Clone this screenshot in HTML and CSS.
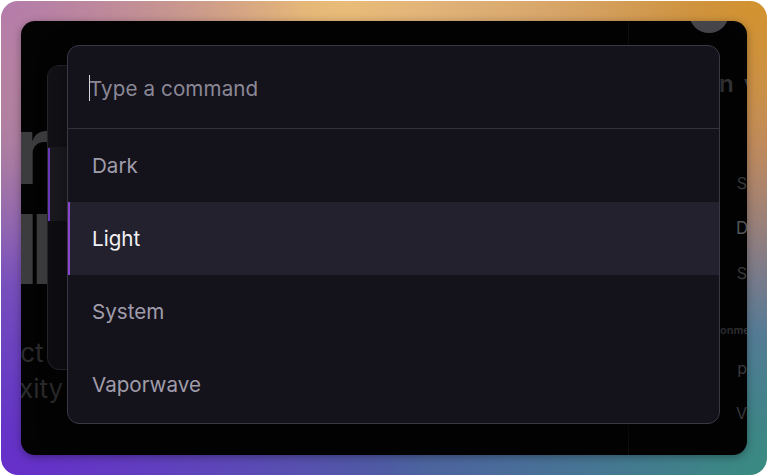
FILE: index.html
```html
<!DOCTYPE html>
<html lang="en">
<head>
<meta charset="utf-8">
<title>Command palette</title>
<link rel="stylesheet" href="styles.css">
</head>
<body>
<div class="frame">
  <div class="window">
    <div class="scene">
      <main class="main">
        <h1 class="hero"><span class="hero-line r">r</span><span class="hero-line ll">ll</span></h1>
        <p class="desc"><span class="desc-line l1">ect</span><span class="desc-line l2">xity</span></p>
      </main>
      <aside class="side">
        <div class="avatar"></div>
        <div class="side-title">n v</div>
        <ul class="side-list">
          <li class="side-item"><span class="mark"></span><span>S</span></li>
          <li class="side-item active"><span class="mark dot"></span><span>D</span></li>
          <li class="side-item"><span class="mark dot"></span><span>S</span></li>
        </ul>
        <div class="side-label">onme</div>
        <ul class="side-list two">
          <li class="side-item"><span class="mark bar"></span><span>p</span></li>
          <li class="side-item"><span class="mark"></span><span>V</span></li>
        </ul>
      </aside>
    </div>

    <div class="palette back" aria-hidden="true">
      <div class="palette-input"></div>
      <div class="palette-row selected"></div>
      <div class="palette-row"></div>
      <div class="palette-row"></div>
    </div>

    <div class="palette front" role="dialog">
      <div class="palette-input"><span class="caret"></span><span class="placeholder">Type a command</span></div>
      <ul class="palette-list">
        <li class="palette-row">Dark</li>
        <li class="palette-row selected">Light</li>
        <li class="palette-row">System</li>
        <li class="palette-row">Vaporwave</li>
      </ul>
    </div>
  </div>
</div>
</body>
</html>
```
FILE: styles.css
```css
* { box-sizing: border-box; }
html, body { margin: 0; padding: 0; background: #ffffff; }
body { font-family: Inter, "Noto Sans", sans-serif; }

.frame {
  width: 766px;
  height: 474px;
  margin: 1px;
  padding: 20px;
  border-radius: 17px;
  background:
    radial-gradient(ellipse 40% 60% at 0% 0%, rgba(180,124,172,1) 0%, rgba(180,124,172,0) 100%),
    radial-gradient(ellipse 45% 55% at 45% 0%, rgba(234,188,120,1) 0%, rgba(234,188,120,0) 100%),
    radial-gradient(ellipse 45% 70% at 100% 0%, rgba(210,146,46,1) 0%, rgba(210,146,46,0) 100%),
    radial-gradient(ellipse 50% 70% at 100% 100%, rgba(56,140,128,1) 0%, rgba(56,140,128,0) 100%),
    radial-gradient(ellipse 55% 70% at 0% 100%, rgba(102,46,202,1) 0%, rgba(102,46,202,0) 100%),
    radial-gradient(ellipse 40% 40% at 50% 100%, rgba(76,96,160,1) 0%, rgba(76,96,160,0) 100%),
    linear-gradient(180deg, #c89a78 0%, #8a6ab0 55%, #5a5ab0 100%);
}

.window {
  position: relative;
  width: 726px;
  height: 434px;
  border-radius: 14px;
  background: #030304;
  overflow: hidden;
  box-shadow: 0 2px 8px rgba(0,0,0,0.35);
}

/* background page */
.scene {
  display: grid;
  grid-template-columns: 607px 119px;
  height: 100%;
}
.main { min-width: 0; }
.hero {
  margin: 78px 0 0 -7px;
  font-size: 96px;
  line-height: 100px;
  font-weight: 600;
  color: #3c3c3e;
}
.hero-line { display: block; }
.hero-line.ll { letter-spacing: -9px; }

.desc {
  margin: 36px 0 0 0;
  font-size: 26px;
  line-height: 36px;
  color: #2a2a2c;
}
.desc-line { display: block; }
.desc-line.l1 { margin-left: -16px; }
.desc-line.l2 { margin-left: -2px; }

.side {
  border-left: 1px solid #0e0e10;
  display: flex;
  flex-direction: column;
}
.avatar {
  width: 40px;
  height: 40px;
  border-radius: 50%;
  background: #46464a;
  margin: -28px 0 0 60px;
}
.side-title {
  margin: 36px 0 0 90px;
  font-size: 24px;
  line-height: 30px;
  font-weight: 600;
  color: #38383b;
  letter-spacing: 2px;
  white-space: nowrap;
}
.side-list {
  list-style: none;
  margin: 74px 0 0 0;
  padding: 0;
  display: flex;
  flex-direction: column;
  gap: 25px;
}
.side-list.two { margin-top: 21px; gap: 25px; }
.side-item {
  display: flex;
  align-items: center;
  height: 20px;
  font-size: 16px;
  color: #3a3a3d;
  padding-left: 90px;
  gap: 17px;
  position: relative;
}
.side-item.active { color: #5a5a5e; font-size: 17px; }
.mark { width: 2px; height: 2px; }
.mark.dot { background: #2e2e31; border-radius: 50%; width: 3px; height: 3px; }
.mark.bar { width: 2px; height: 9px; background: #222225; }
.side-label {
  margin: 40px 0 0 91px;
  font-size: 11px;
  font-weight: 600;
  line-height: 14px;
  color: #333336;
  white-space: nowrap;
}

/* palettes */
.palette {
  position: absolute;
  border-radius: 12px;
  overflow: hidden;
}
.palette.back {
  left: 26px;
  top: 44px;
  width: 640px;
  height: 305px;
  background: #0f0e12;
  border: 1px solid #27262c;
}
.palette.back .palette-input {
  height: 82px;
  background: #131217;
  border-bottom: 1px solid #1c1b21;
}
.palette.back .palette-row { height: 73px; }
.palette.back .palette-row.selected {
  background: #1b1a20;
  box-shadow: inset 2px 0 0 #6c3cc0;
}

.palette.front {
  left: 46px;
  top: 24px;
  width: 653px;
  height: 379px;
  background: #14121b;
  border: 1px solid #3a3845;
  box-shadow: 0 10px 30px rgba(0,0,0,0.45);
}
.palette-input {
  height: 83px;
  display: flex;
  align-items: center;
  padding-left: 21px;
  padding-top: 2px;
  border-bottom: 1px solid #34323e;
  position: relative;
}
.caret {
  width: 1px;
  height: 26px;
  background: #d8d6e0;
  margin-right: -1px;
  flex: none;
}
.placeholder {
  font-size: 20.6px;
  color: #8b8896;
  letter-spacing: 0.1px;
}
.palette-list {
  list-style: none;
  margin: 0;
  padding: 0;
}
.palette-list .palette-row {
  height: 73px;
  display: flex;
  align-items: center;
  padding-left: 24px;
  font-size: 20.6px;
  color: #a09dab;
}
.palette-list .palette-row.selected {
  background: #23212e;
  color: #f2f1f6;
  box-shadow: inset 2px 0 0 #8a45d0;
}
```
